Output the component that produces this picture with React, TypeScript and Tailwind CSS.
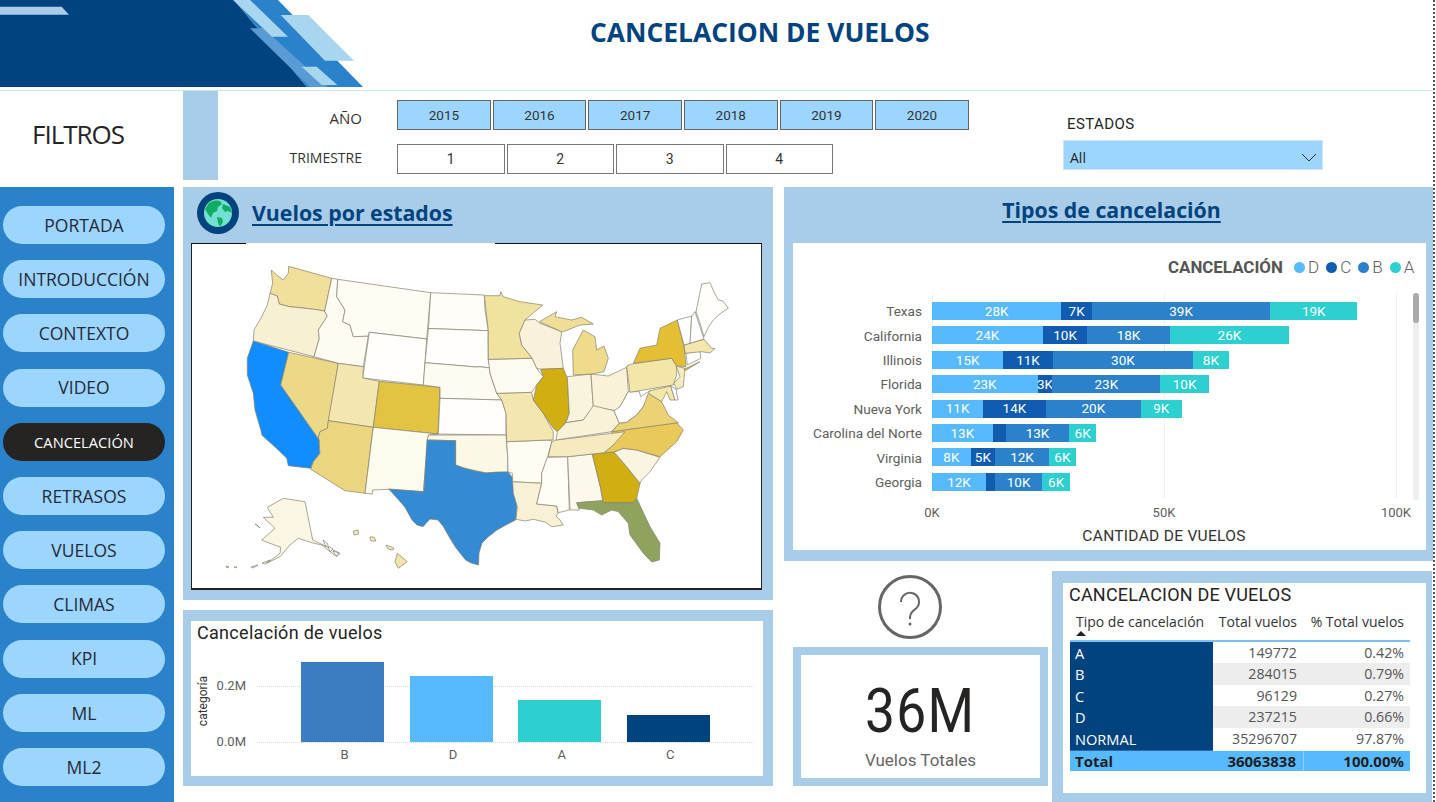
const NAV = ["PORTADA", "INTRODUCCIÓN", "CONTEXTO", "VIDEO", "CANCELACIÓN", "RETRASOS", "VUELOS", "CLIMAS", "KPI", "ML", "ML2"];
const YEARS = ["2015", "2016", "2017", "2018", "2019", "2020"];

const SEG = {
  D: "bg-[#57baff]",
  C: "bg-[#0f5cb0]",
  B: "bg-[#2b82ca]",
  A: "bg-[#2dcfd0]",
};

type SegKey = keyof typeof SEG;

const ROWS: { name: string; segs: [SegKey, number, string][] }[] = [
  { name: "Texas", segs: [["D", 129.4, "28K"], ["C", 30.5, "7K"], ["B", 178.4, "39K"], ["A", 86.9, "19K"]] },
  { name: "California", segs: [["D", 110.8, "24K"], ["C", 44.5, "10K"], ["B", 82.4, "18K"], ["A", 119.5, "26K"]] },
  { name: "Illinois", segs: [["D", 71.3, "15K"], ["C", 49.4, "11K"], ["B", 140.5, "30K"], ["A", 35.4, "8K"]] },
  { name: "Florida", segs: [["D", 105.5, "23K"], ["C", 14.8, "3K"], ["B", 108, "23K"], ["A", 48.6, "10K"]] },
  { name: "Nueva York", segs: [["D", 51.1, "11K"], ["C", 62.6, "14K"], ["B", 95.2, "20K"], ["A", 40.8, "9K"]] },
  { name: "Carolina del Norte", segs: [["D", 60.6, "13K"], ["C", 13.6, ""], ["B", 62.6, "13K"], ["A", 27.6, "6K"]] },
  { name: "Virginia", segs: [["D", 38.7, "8K"], ["C", 24.3, "5K"], ["B", 54, "12K"], ["A", 26.8, "6K"]] },
  { name: "Georgia", segs: [["D", 54, "12K"], ["C", 9.1, ""], ["B", 47, "10K"], ["A", 28, "6K"]] },
];

const TABLE = [
  ["A", "149772", "0.42%"],
  ["B", "284015", "0.79%"],
  ["C", "96129", "0.27%"],
  ["D", "237215", "0.66%"],
  ["NORMAL", "35296707", "97.87%"],
];

// state outlines, in page pixels
const STATES: [string, string][] = [
  ["288.7,266.3 331.7,278.3 324.7,311 314,309.3 300,307.7 289.3,306.7 279.3,304 277.3,296 270,293.3 272.7,283.3 271.3,270 276.7,275 283.3,280 288.3,273.3", "#f0e09b"],
  ["270,293.3 277.3,296 279.3,304 289.3,306.7 300,307.7 314,309.3 324.7,311 327.3,316 322.7,323.3 318.3,330 319.3,338.3 314,356.7 253.3,341 254,330 261.7,316.7 267.3,305", "#f7f0d2"],
  ["253.3,341 288.7,352.3 280.7,385 319.3,440 319.3,445 320,453.3 313.3,461.7 310.7,468.3 288.3,465.7 286.7,458.3 278.3,450 261.7,435 261.7,433.3 255,410 253.3,393.3 247.3,375 247.3,358.3", "#118dff"],
  ["288.7,352.3 338.3,363.3 327.3,428.3 320,431.7 318.3,438.3 319.3,440 280.7,385", "#ecd987"],
  ["331.7,278.3 337.7,279.3 336.7,296.7 345,310 342.7,321.7 350,325 353.3,336.7 368.3,336 363.3,366.7 338.3,363.3 314,356.7 319.3,338.3 318.3,330 322.7,323.3 327.3,316 324.7,311", "#fefcf2"],
  ["337.7,279.3 430.7,292.7 426.7,339 369.3,332.3 368.3,336 353.3,336.7 350,325 342.7,321.7 345,310 336.7,296.7", "#fefcf3"],
  ["369.3,332.3 426.7,339 423.3,385 362.7,378", "#fffefb"],
  ["338.3,363.3 363.3,366.7 362.7,378 379.3,381.3 373.3,427.3 328.3,420.7", "#f3e6b0"],
  ["328.3,420.7 373.3,427.3 372.7,430 365,493.3 345,490.7 310.7,469.3 313.3,461.7 320,453.3 319.3,445 319.3,440 318.3,438.3 320,431.7 327.3,428.3", "#ebd67f"],
  ["379.3,381.3 440,387.3 438,434 373.3,427.3", "#e3c342"],
  ["373.3,427.3 438,434 428.3,435 423.3,491.7 389,489.3 372.7,490 372.3,494 365,493.3", "#fdfaee"],
  ["430.7,292.7 484.3,295 485,310 488.3,330.7 428.5,328.5", "#fefdf7"],
  ["428.5,328.5 488.3,330.7 488,340 488.3,360 490,368 480,366.7 476.7,367 425,362.7", "#fffefb"],
  ["425,362.7 476.7,367 480,366.7 490,368 490,373.3 496.7,393.3 501.7,400 440,398.3 440,387.3 423.3,385", "#fdfbf2"],
  ["440,398.3 501.7,400 506,413.3 506,435 438.3,434", "#fffefa"],
  ["428.6,435 506,435 507.7,457 508,472 486,473 463.8,468 455.6,465 455.6,440.7 427,440", "#fbf8e8"],
  ["427,440 455.6,440.7 455.6,465 463.8,468 475,471 486,473 497,472 508,472 511.9,476.7 514,490 517.4,503 515.6,520 506,525 497,530 488,537 482,543 479,553 478.6,565 471,563 465.6,560 456,548 449,536.7 443,526 437.9,520 430,519 423,526.7 417,525 412,520 404.6,506.7 396,497 388.7,489 423.8,491.7", "#348ad3"],
  ["506.7,441.7 548.3,440 552,441 547.3,458.3 541.7,473.3 541.7,483.3 512.7,481.7 512.3,473.3 508,472 507.7,457", "#fefcf3"],
  ["512.7,481.7 541.7,483.3 536.7,504 556.7,506 558,513 556,516 560,520 563.3,525 557,526 551.7,526.7 545,522 533.3,519.3 525,521 516,519.3 517.3,506.7 513.3,493.3", "#f8f1d5"],
  ["547.3,457.3 567.7,456.7 569.3,510 558.3,512.7 556.7,506 536.7,504 541.7,483.3 541.7,473.3", "#fffdf6"],
  ["567.7,456.7 592.3,454 600.7,488.3 602.7,500.7 576.7,502.7 579.3,510 570,510", "#fcf9ec"],
  ["592.3,454 614,452 626.7,466.7 640,483.3 636.7,498.3 632.7,502.7 603.3,502.7 600.7,488.3", "#d1af13"],
  ["576.7,502.7 602.7,500.7 603.3,502.7 632.7,502.7 636.7,498.3 650,526.7 660,543.3 659.3,560 651.7,562 643.3,553.3 630,535 628.3,523.3 618.3,511.7 611.7,510 601.7,515 593.3,510 579.3,508.3", "#8fa35e"],
  ["614,452 623.3,448.3 636.7,450 660,457.3 650,471.7 641.7,480 640,483.3 626.7,466.7", "#faf5e0"],
  ["604,452.7 613.3,445 611.7,431.7 676.7,422.7 683.3,430 676.7,441.7 660,456.7 636.7,450 623.3,448.3 614,452", "#e8c95a"],
  ["548.3,456.7 551.7,441.7 556,440 625,431.7 613.3,445 604,452.7 592.3,454 567.7,456.7", "#f5ebbe"],
  ["496.7,393.3 531.7,392.3 533.3,400 543.3,413.3 553.3,431.7 553.3,440 548.3,440 506.7,441.7 506,413.3 501.7,400", "#f3e6b0"],
  ["488.3,359.3 532.3,358.3 536.7,368.3 543.3,376.7 536.7,385 531.7,392.3 496.7,393.3 490,373.3", "#fdfaf0"],
  ["484.3,295.7 500,295.7 500.7,291.7 503.3,296.7 520,301.7 542.7,305 525,320 519.3,333.3 521.7,345 532.3,358.3 488.3,359.3 488.3,330.7", "#f2e29f"],
  ["525,320 535,319.3 540,323.3 561.7,331.7 560,343.3 563.3,368.3 540.7,369.3 536.7,368.3 532.3,358.3 521.7,345 519.3,333.3", "#f8f2da"],
  ["540.7,369.3 563.3,368.3 567.3,378.3 569.3,413.3 565,423.3 562.7,431.7 557.3,431.7 553.3,428.3 543.3,413.3 533.3,400 536.7,385 543.3,376.7", "#d1af13"],
  ["567.3,376.7 591,374 593.3,406.7 583.3,420 566,422.7 569.3,413.3", "#f9f4dd"],
  ["591,374 608.3,376 626.7,367.3 628.3,391.7 620,406.7 615,410.7 593.3,406.7", "#f9f2d8"],
  ["593.3,405.7 614,410.7 619.3,423.3 611.7,431.7 556,440 557.3,431.7 566,422.7 583.3,420", "#f8f2d8"],
  ["628.3,391.7 639.3,391.7 640.7,396.7 650,390.7 656,395 648.3,398.3 643.3,406.7 636.7,415 626.7,422.3 619.3,423.3 614,410.7 620,406.7", "#ffffff"],
  ["611.7,431.7 619.3,423.3 626.7,422.3 636.7,415 643.3,406.7 648.3,393.3 661.7,401.7 668.3,415 678.3,422.7", "#ecd275"],
  ["626.7,366 631.7,364 671.7,358.3 676.7,366 676.7,375 673.3,385 630,392.3", "#f3e6a8"],
  ["633.3,363.3 640,348.3 656.7,345 660,328.3 677.3,320 684,346.7 686,366.7 676.7,366 671.7,358.3", "#e5bf33"],
  ["676,366 685,368.3 683.3,386.7 676.7,389.3 674,383.3 680,376.7", "#f5ebbe"],
  ["650,390.7 670.7,386 675,400 670,400 666.7,391.7 661.7,401.7 648.3,393.3", "#f3e6a8"],
  ["670.7,386 676,389 678,400 675,400", "#ffffff"],
  ["684,369.3 700,361.7 685,370.7", "#e5bf33"],
  ["686,353.3 700,350.7 700.7,358.3 687.3,365", "#ffffff"],
  ["684.3,345 704,339.3 711.7,348.3 715,348.3 710,353 701.7,351.7 685,353.3", "#f5e6ae"],
  ["677.3,320 691.7,316 690,343.3 684,345", "#ffffff"],
  ["691.7,316 695,311.7 704,339 690,343.3", "#ffffff"],
  ["696,311.7 701.7,284 710,282.7 714,292 718.3,300 723,301 728.3,308.3 721,313 713.3,320 709,326 704,336.7 700,323.3", "#fffefb"],
  ["573.3,375 572.7,350 583.3,330 595,336.7 596.7,350 604,346 608.3,358.3 604,371.7 591,374", "#efdb8c"],
  ["539.3,321.7 556.7,311.7 555,316.7 571.7,320 581.7,317.3 593.3,324 580,325 563.3,331.7 561.7,331.7", "#f0de96"],
  ["283.3,498.3 305,501.7 312.7,540 323.3,545 340,553.3 336.7,556.7 321.7,545 311.7,542.7 298.3,538.3 290,545 280,556.7 266.7,563.3 280,553.3 280.7,547.3 270,543.3 261.7,540 275,528.3 263.3,517.3 273.3,517.3 267.3,507.3", "#faf6e3"],
  ["397.3,553.3 407.3,561.7 398.3,568.3 395,561.7", "#f1e5ad"],
  ["353.5,531 358,530 358.5,534 354,535", "#f5ebbe"],
  ["370,537 374,537 376,541 371,541", "#f5ebbe"],
  ["386,545 394,548 393,550 388,549", "#f5ebbe"],
  ["255,524 259,527 260,528 257,525", "#faf6e3"],
  ["251,567 258,565 253,568", "#faf6e3"],
  ["262,563 270,560 265,564", "#faf6e3"],
  ["226,566 229,567 227,568", "#faf6e3"],
  ["234,567 237,567 235,568", "#faf6e3"],
  ["323,540 328,544 326,547", "#fff"],
  ["328,546 333,549 330,552", "#fff"],
  ["333,551 339,553 336,556", "#fff"],
];

function Banner() {
  return (
    <svg width="363" height="87" viewBox="0 0 363 87" className="block shrink-0">
      <polygon points="0,0 234,0 307,87 0,87" fill="#00437f" />
      <polygon points="234,0 278,0 363,87 307,87" fill="#2a82ca" />
      <polygon points="250,28.3 263.3,28.3 328,87 310,87" fill="#5b9bd5" />
      <polygon points="233,0 250,0 288,36.7 272,36.7" fill="#a9d6ef" />
      <polygon points="280.7,15 308.3,15 354,60.7 325,60.7" fill="#a9d6ef" />
      <polygon points="301.7,66.7 316.7,66.7 337.3,85 321.7,85" fill="#a9d6ef" />
      <polygon points="0,6.7 61.7,6.7 69,14.7 0,14.7" fill="#a9cde9" />
    </svg>
  );
}

function Globe() {
  return (
    <svg width="42" height="42" viewBox="0 0 42 42" className="block shrink-0">
      <circle cx="21" cy="21" r="21" fill="#00437f" />
      <circle cx="21" cy="21" r="14" fill="#74e0d2" />
      <path d="M12 11c4-3 9-3 11-2l2 3-4 3-1 4-4 2-2 5-3-4-3-5z" fill="#0fae63" />
      <path d="M20 25l5 1 1 4-3 5-2-4z" fill="#0fae63" />
      <path d="M26 12l7 3 2 6-4-2-3 1-3-4z" fill="#0fae63" />
    </svg>
  );
}

function UsMap() {
  return (
    <svg viewBox="192 244 569 345" width="569" height="345" className="block">
      {STATES.map(([points, fill], i) => (
        <polygon key={i} points={points} fill={fill} stroke="#85826f" strokeWidth="0.7" strokeLinejoin="round" />
      ))}
    </svg>
  );
}

function StackedChart() {
  return (
    <div className="relative h-full bg-white font-['Roboto',sans-serif]">
      <div className="flex h-[34px] items-end justify-start pl-[375px] text-[#605e5c]">
        <span className="w-[126px] text-[16.900px] leading-[20px] font-bold text-[#555]">CANCELACIÓN</span>
        {(["D", "C", "B", "A"] as SegKey[]).map((k) => (
          <span key={k} className="mr-[7px] flex items-center gap-[3px] text-[17px] leading-[20px] font-light">
            <span className={`h-[11px] w-[11px] rounded-full ${SEG[k]}`} />
            {k}
          </span>
        ))}
      </div>
      <div className="relative mt-[25px] flex flex-col gap-[6.4px]">
        <div className="absolute top-[-10px] bottom-[-6px] left-[139px] border-l border-dotted border-[#e2e2e2]" />
        <div className="absolute top-[-10px] bottom-[-6px] left-[371px] border-l border-dotted border-[#e2e2e2]" />
        <div className="absolute top-[-10px] bottom-[-6px] left-[603px] border-l border-dotted border-[#e2e2e2]" />
        {ROWS.map((r) => (
          <div key={r.name} className="relative flex h-[18px] items-center">
            <span className="w-[129px] pt-px text-right text-[13.600px] whitespace-nowrap text-[#605e5c]">{r.name}</span>
            <div className="ml-[10px] flex h-[18px]">
              {r.segs.map(([k, w, label], i) => (
                <span
                  key={i}
                  className={`flex items-center justify-center overflow-visible text-[13.5px] whitespace-nowrap text-white ${SEG[k]}`}
                  style={{ width: w }}
                >
                  {label}
                </span>
              ))}
            </div>
          </div>
        ))}
      </div>
      <div className="mt-[14px] ml-[109px] flex h-[16px] gap-[172px] text-center text-[13px] leading-[16px] text-[#605e5c]">
        <span className="w-[60px]">0K</span>
        <span className="w-[60px]">50K</span>
        <span className="w-[60px]">100K</span>
      </div>
      <div className="mt-[5px] ml-[139px] w-[464px] text-center text-[15.500px] leading-[20px] tracking-[0.3px] text-[#333]">
        CANTIDAD DE VUELOS
      </div>
      {/* scrollbar */}
      <div className="absolute top-[50px] left-[620px] h-[207px] w-[6px] rounded-full bg-[#eee]">
        <div className="h-[30px] w-[6px] rounded-full bg-[#aaa]" />
      </div>
    </div>
  );
}

function BarChart() {
  const bars = [
    { label: "B", h: 80, color: "bg-[#3b7dc1]" },
    { label: "D", h: 66, color: "bg-[#57baff]" },
    { label: "A", h: 42, color: "bg-[#2dcfd0]" },
    { label: "C", h: 27, color: "bg-[#00437f]" },
  ];
  return (
    <div className="h-full bg-white font-['Roboto',sans-serif]">
      <div className="pt-[1px] pl-[6px] text-[18px] leading-[22px] tracking-[0.3px] text-[#252423]">Cancelación de vuelos</div>
      <div className="flex">
        <div className="relative h-[96px] w-[66px] shrink-0">
          <span className="absolute top-[50px] left-[-13px] -rotate-90 text-[12px] leading-[14px] text-[#333]">categoría</span>
          <span className="absolute top-[34px] right-[11px] text-[13px] leading-[16px] text-[#605e5c]">0.2M</span>
          <span className="absolute top-[90px] right-[11px] text-[13px] leading-[16px] text-[#605e5c]">0.0M</span>
        </div>
        <div className="flex-1 pr-[9px]">
          <div className="relative flex h-[99px] items-end gap-[25.6px] border-b border-dotted border-[#d5d5d5] pl-[44px]">
            <div className="absolute top-[42px] right-0 left-0 border-t border-dotted border-[#d5d5d5]" />
            {bars.map((b) => (
              <div key={b.label} className={`relative w-[83px] ${b.color}`} style={{ height: b.h }} />
            ))}
          </div>
          <div className="mt-[4px] flex gap-[25.6px] pl-[46px] text-[13px] leading-[16px] text-[#605e5c]">
            {bars.map((b) => (
              <span key={b.label} className="w-[83px] text-center">
                {b.label}
              </span>
            ))}
          </div>
        </div>
      </div>
    </div>
  );
}

function Question() {
  return (
    <svg width="64" height="64" viewBox="0 0 64 64" fill="none" className="block">
      <circle cx="32" cy="32" r="30.5" stroke="#666" strokeWidth="3" />
      <path d="M23 27a9 9 0 1 1 15 6.500c-3 2.500-6 4-6 9v1.500" stroke="#666" strokeWidth="2" />
      <circle cx="32" cy="49" r="1.500" fill="#666" />
    </svg>
  );
}

function CancelTable() {
  return (
    <div className="h-full bg-white pr-[16px] pl-[7px] font-['Open_Sans',sans-serif]">
      <div className="ml-[-1px] h-[29px] pt-[1px] font-['Roboto',sans-serif] text-[18px] leading-[22px] tracking-[0.2px] text-[#252423]">
        CANCELACION DE VUELOS
      </div>
      <div className="grid h-[30px] grid-cols-[143px_91px_106px] border-b-2 border-[#7cc0f5] text-[14px] leading-[20px] whitespace-nowrap text-[#333]">
        <div className="pl-[6px]">
          Tipo de cancelación
          <svg width="10" height="5" viewBox="0 0 10 5" className="mt-[-1px] block">
            <polygon points="5,0 10,5 0,5" fill="#222" />
          </svg>
        </div>
        <div className="pr-[7px] text-right">Total vuelos</div>
        <div className="pr-[6px] text-right">% Total vuelos</div>
      </div>
      {TABLE.map(([k, a, b], i) => (
        <div key={k} className="grid h-[21.4px] grid-cols-[143px_91px_106px] text-[14.200px] leading-[22px]">
          <div className="border-b border-[#2a6aa5] bg-[#00437f] pl-[5px] text-[14.600px] text-white">{k}</div>
          <div className={`pr-[7px] text-right text-[#555] ${i % 2 ? "bg-[#eeedee]" : "bg-white"}`}>{a}</div>
          <div className={`pr-[6px] text-right text-[#555] ${i % 2 ? "bg-[#eeedee]" : "bg-white"}`}>{b}</div>
        </div>
      ))}
      <div className="grid h-[22px] grid-cols-[143px_91px_106px] border-t-2 border-[#00437f] bg-[#57baff] text-[15px] leading-[20px] font-bold text-[#1f1f1f]">
        <div className="pl-[5px]">Total</div>
        <div className="border-r border-[#8fd0ff] pr-[7px] text-right">36063838</div>
        <div className="pr-[6px] text-right">100.00%</div>
      </div>
    </div>
  );
}

export default function App() {
  return (
    <div className="flex h-[802px] w-[1436px] overflow-hidden bg-white font-['Open_Sans',sans-serif]">
      <div className="w-[1433px] shrink-0">
        <header className="flex h-[87px]">
          <Banner />
          <h1 className="pt-[15px] pl-[227px] text-[26.400px] leading-[34px] font-bold whitespace-nowrap text-[#00437f]">
            CANCELACION DE VUELOS
          </h1>
        </header>
        <div className="mt-[3px] h-px bg-[#c5e2f7]" />

        {/* filtros */}
        <div className="flex h-[89px]">
          <div className="flex w-[183px] items-center pb-[2px] pl-[32px] text-[26px] tracking-[-1px] text-[#252423]">FILTROS</div>
          <div className="h-full w-[35px] bg-[#a9cde9]" />
          <div className="grid grid-cols-[144px_572px] content-start gap-x-[35px] gap-y-[14px] pt-[9px] font-['Roboto',sans-serif] text-[14px] text-[#333]">
            <div className="pt-[8px] text-right font-['Open_Sans',sans-serif] text-[15px] leading-[20px]">AÑO</div>
            <div className="flex gap-[1.800px] text-[13.500px]">
              {YEARS.map((y) => (
                <div key={y} className="flex h-[30px] w-[94px] items-center justify-center border border-[#666] bg-[#9cd6ff]">
                  {y}
                </div>
              ))}
            </div>
            <div className="pt-[4px] text-right font-['Open_Sans',sans-serif] leading-[20px]">TRIMESTRE</div>
            <div className="flex gap-[2px]">
              {["1", "2", "3", "4"].map((t) => (
                <div key={t} className="flex h-[30px] w-[107.500px] items-center justify-center border border-[#777] bg-white">
                  {t}
                </div>
              ))}
            </div>
          </div>
          <div className="ml-[94px] pt-[23px]">
            <div className="pl-[4px] font-['Roboto',sans-serif] text-[15px] leading-[20px] tracking-[0.4px] text-[#252423]">ESTADOS</div>
            <div className="mt-[6px] flex h-[30px] w-[260px] items-center justify-between border border-[#cfe6fa] bg-[#9cd6ff] pt-[4px] pr-[5px] pl-[6px] text-[14px] text-[#252423]">
              All
              <svg width="16" height="9" viewBox="0 0 16 9" fill="none">
                <path d="M1 1l7 7 7-7" stroke="#333" strokeWidth="1" />
              </svg>
            </div>
          </div>
        </div>

        <div className="mt-[7px] flex h-[615px]">
          <nav className="flex w-[174px] shrink-0 flex-col gap-[16.200px] bg-[#2a82ca] pt-[19px] pl-[3px]">
            {NAV.map((n) => (
              <div
                key={n}
                className={
                  n === "CANCELACIÓN"
                    ? "flex h-[38px] w-[162px] items-center justify-center rounded-[19px] bg-[#252423] text-[14.700px] text-white"
                    : "flex h-[38px] w-[162px] items-center justify-center rounded-[19px] bg-[#9cd6ff] text-[17.500px] text-[#252a3a]"
                }
              >
                {n}
              </div>
            ))}
          </nav>

          <div className="ml-[9px] w-[590px] shrink-0">
            <section className="h-[413px] bg-[#a9cde9] pr-[11px] pl-[8px]">
              <div className="flex h-[56px] items-center gap-[13px] pb-[4px] pl-[6px]">
                <Globe />
                <h2 className="text-[21.300px] font-bold whitespace-nowrap text-[#00437f] underline underline-offset-[3px]">Vuelos por estados</h2>
              </div>
              <div className="flex h-px">
                <div className="w-[55px] bg-[#111]" />
                <div className="w-[249px] bg-white" />
                <div className="flex-1 bg-[#111]" />
              </div>
              <div className="h-[346px] border-x border-b-2 border-[#222] bg-white">
                <UsMap />
              </div>
            </section>
            <section className="mt-[10px] h-[176px] bg-[#a9cde9] pt-[11px] pr-[10px] pb-[10px] pl-[8px]">
              <BarChart />
            </section>
          </div>

          <div className="ml-[11px] w-[649px] shrink-0">
            <section className="h-[374px] bg-[#a9cde9] pr-[7px] pb-[11px] pl-[9px]">
              <div className="flex h-[56px] justify-center pt-[7px] pr-[9px] pl-[13px]">
                <h2 className="text-[21.300px] font-bold whitespace-nowrap text-[#00437f] underline underline-offset-[3px]">Tipos de cancelación</h2>
              </div>
              <div className="h-[307px]">
                <StackedChart />
              </div>
            </section>

            <div className="mt-[10px] flex">
              <div className="ml-[9px] w-[255px] shrink-0">
                <div className="flex justify-center pt-[4px] pr-[21px]">
                  <Question />
                </div>
                <div className="mt-[8px] flex h-[139px] flex-col items-center border-[8px] border-[#a9cde9] bg-white font-['Roboto',sans-serif]">
                  <div className="mt-[20px] scale-x-[0.86] text-[62px] leading-[72px] tracking-[1.500px] text-[#252423]">36M</div>
                  <div className="mt-[2px] text-[17px] leading-[22px] text-[#666]">Vuelos Totales</div>
                </div>
              </div>
              <section className="ml-[4px] h-[231px] w-[380px] bg-[#a9cde9] pt-[12px] pr-[6px] pb-[9px] pl-[11px]">
                <CancelTable />
              </section>
            </div>
          </div>
        </div>
      </div>
      <div className="h-full w-[2px] border-l-2 border-dotted border-[#555]" />
    </div>
  );
}
